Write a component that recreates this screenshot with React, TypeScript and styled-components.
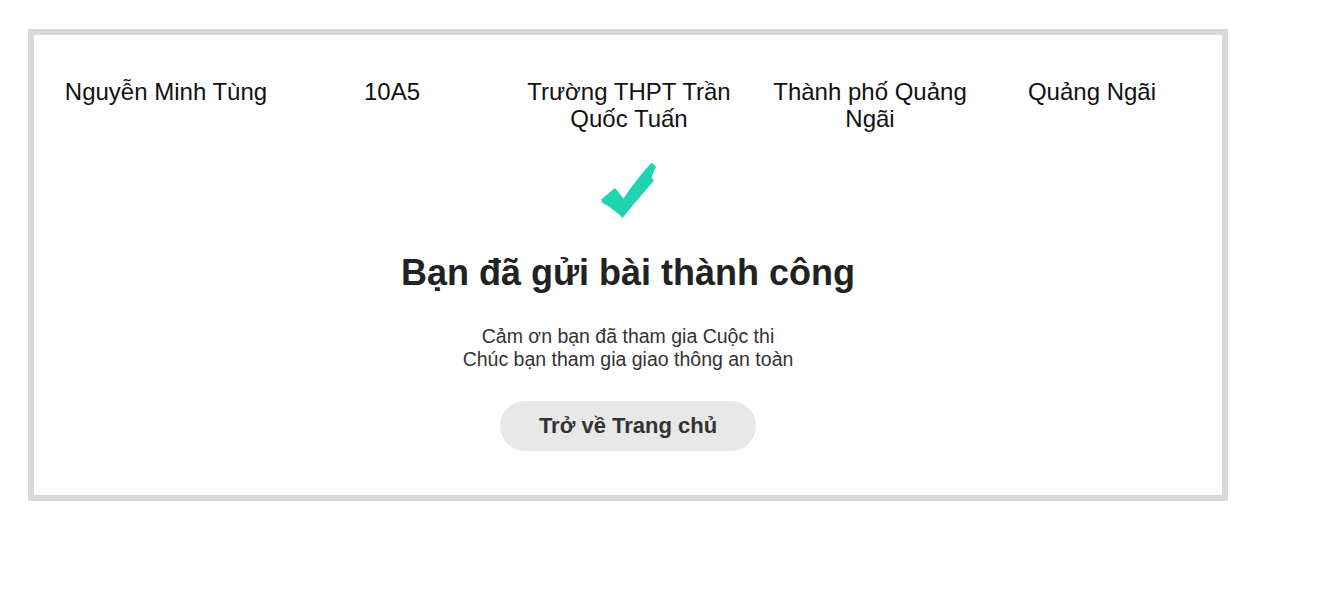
import React from "react";
import styled, { createGlobalStyle } from "styled-components";

const GlobalStyle = createGlobalStyle`
  html, body {
    margin: 0;
    padding: 0;
    background: #ffffff;
    font-family: "Liberation Sans", Arial, sans-serif;
  }
`;

const Page = styled.div`
  padding: 29px 0 0 28px;
`;

const Frame = styled.section`
  box-sizing: border-box;
  width: 1200px;
  height: 472px;
  border: 6px solid #d9d9d9;
  background: #ffffff;
  display: flex;
  flex-direction: column;
`;

const InfoRow = styled.div`
  display: grid;
  grid-template-columns: 218px 234px 240px 242px 202px;
  padding: 43px 0 0 23px;
`;

const InfoCell = styled.div`
  font-size: 24px;
  line-height: 27px;
  color: #111111;
  text-align: center;
  padding: 0 4px;
`;

const Success = styled.div`
  display: flex;
  flex-direction: column;
  align-items: center;
  padding-top: 28px;
`;

const CheckIcon = styled.svg`
  width: 60px;
  height: 60px;
  display: block;
`;

const Title = styled.h1`
  margin: 32px 0 0;
  font-size: 36px;
  font-weight: 700;
  line-height: 41px;
  color: #222222;
`;

const Message = styled.p`
  margin: 32px 0 0;
  font-size: 19.5px;
  line-height: 23px;
  color: #333333;
  text-align: center;
`;

const HomeButton = styled.button`
  margin-top: 30px;
  height: 50px;
  padding: 0 39px;
  border: none;
  border-radius: 25px;
  background: #e9e8e9;
  color: #333333;
  font-family: "Liberation Sans", Arial, sans-serif;
  font-size: 22px;
  font-weight: 700;
  cursor: pointer;
`;

const info = [
  "Nguyễn Minh Tùng",
  "10A5",
  "Trường THPT Trần Quốc Tuấn",
  "Thành phố Quảng Ngãi",
  "Quảng Ngãi",
];

export default function App() {
  return (
    <>
      <GlobalStyle />
      <Page>
        <Frame>
          <InfoRow>
            {info.map((t) => (
              <InfoCell key={t}>{t}</InfoCell>
            ))}
          </InfoRow>
          <Success>
            <CheckIcon viewBox="0 0 60 60">
              <path
                d="M3 39.5 L17 28 L25.5 38.5 C34 26 44 13 53 3 C55 3.5 57 5 58 7 C56 10.5 54.5 14 53.5 17.5 L56 20.5 C46 32 35 45 24.5 58 C19 52 11 46 4.5 43 Z"
                fill="#1fd4b1"
              />
            </CheckIcon>
            <Title>Bạn đã gửi bài thành công</Title>
            <Message>
              Cảm ơn bạn đã tham gia Cuộc thi
              <br />
              Chúc bạn tham gia giao thông an toàn
            </Message>
            <HomeButton>Trở về Trang chủ</HomeButton>
          </Success>
        </Frame>
      </Page>
    </>
  );
}
